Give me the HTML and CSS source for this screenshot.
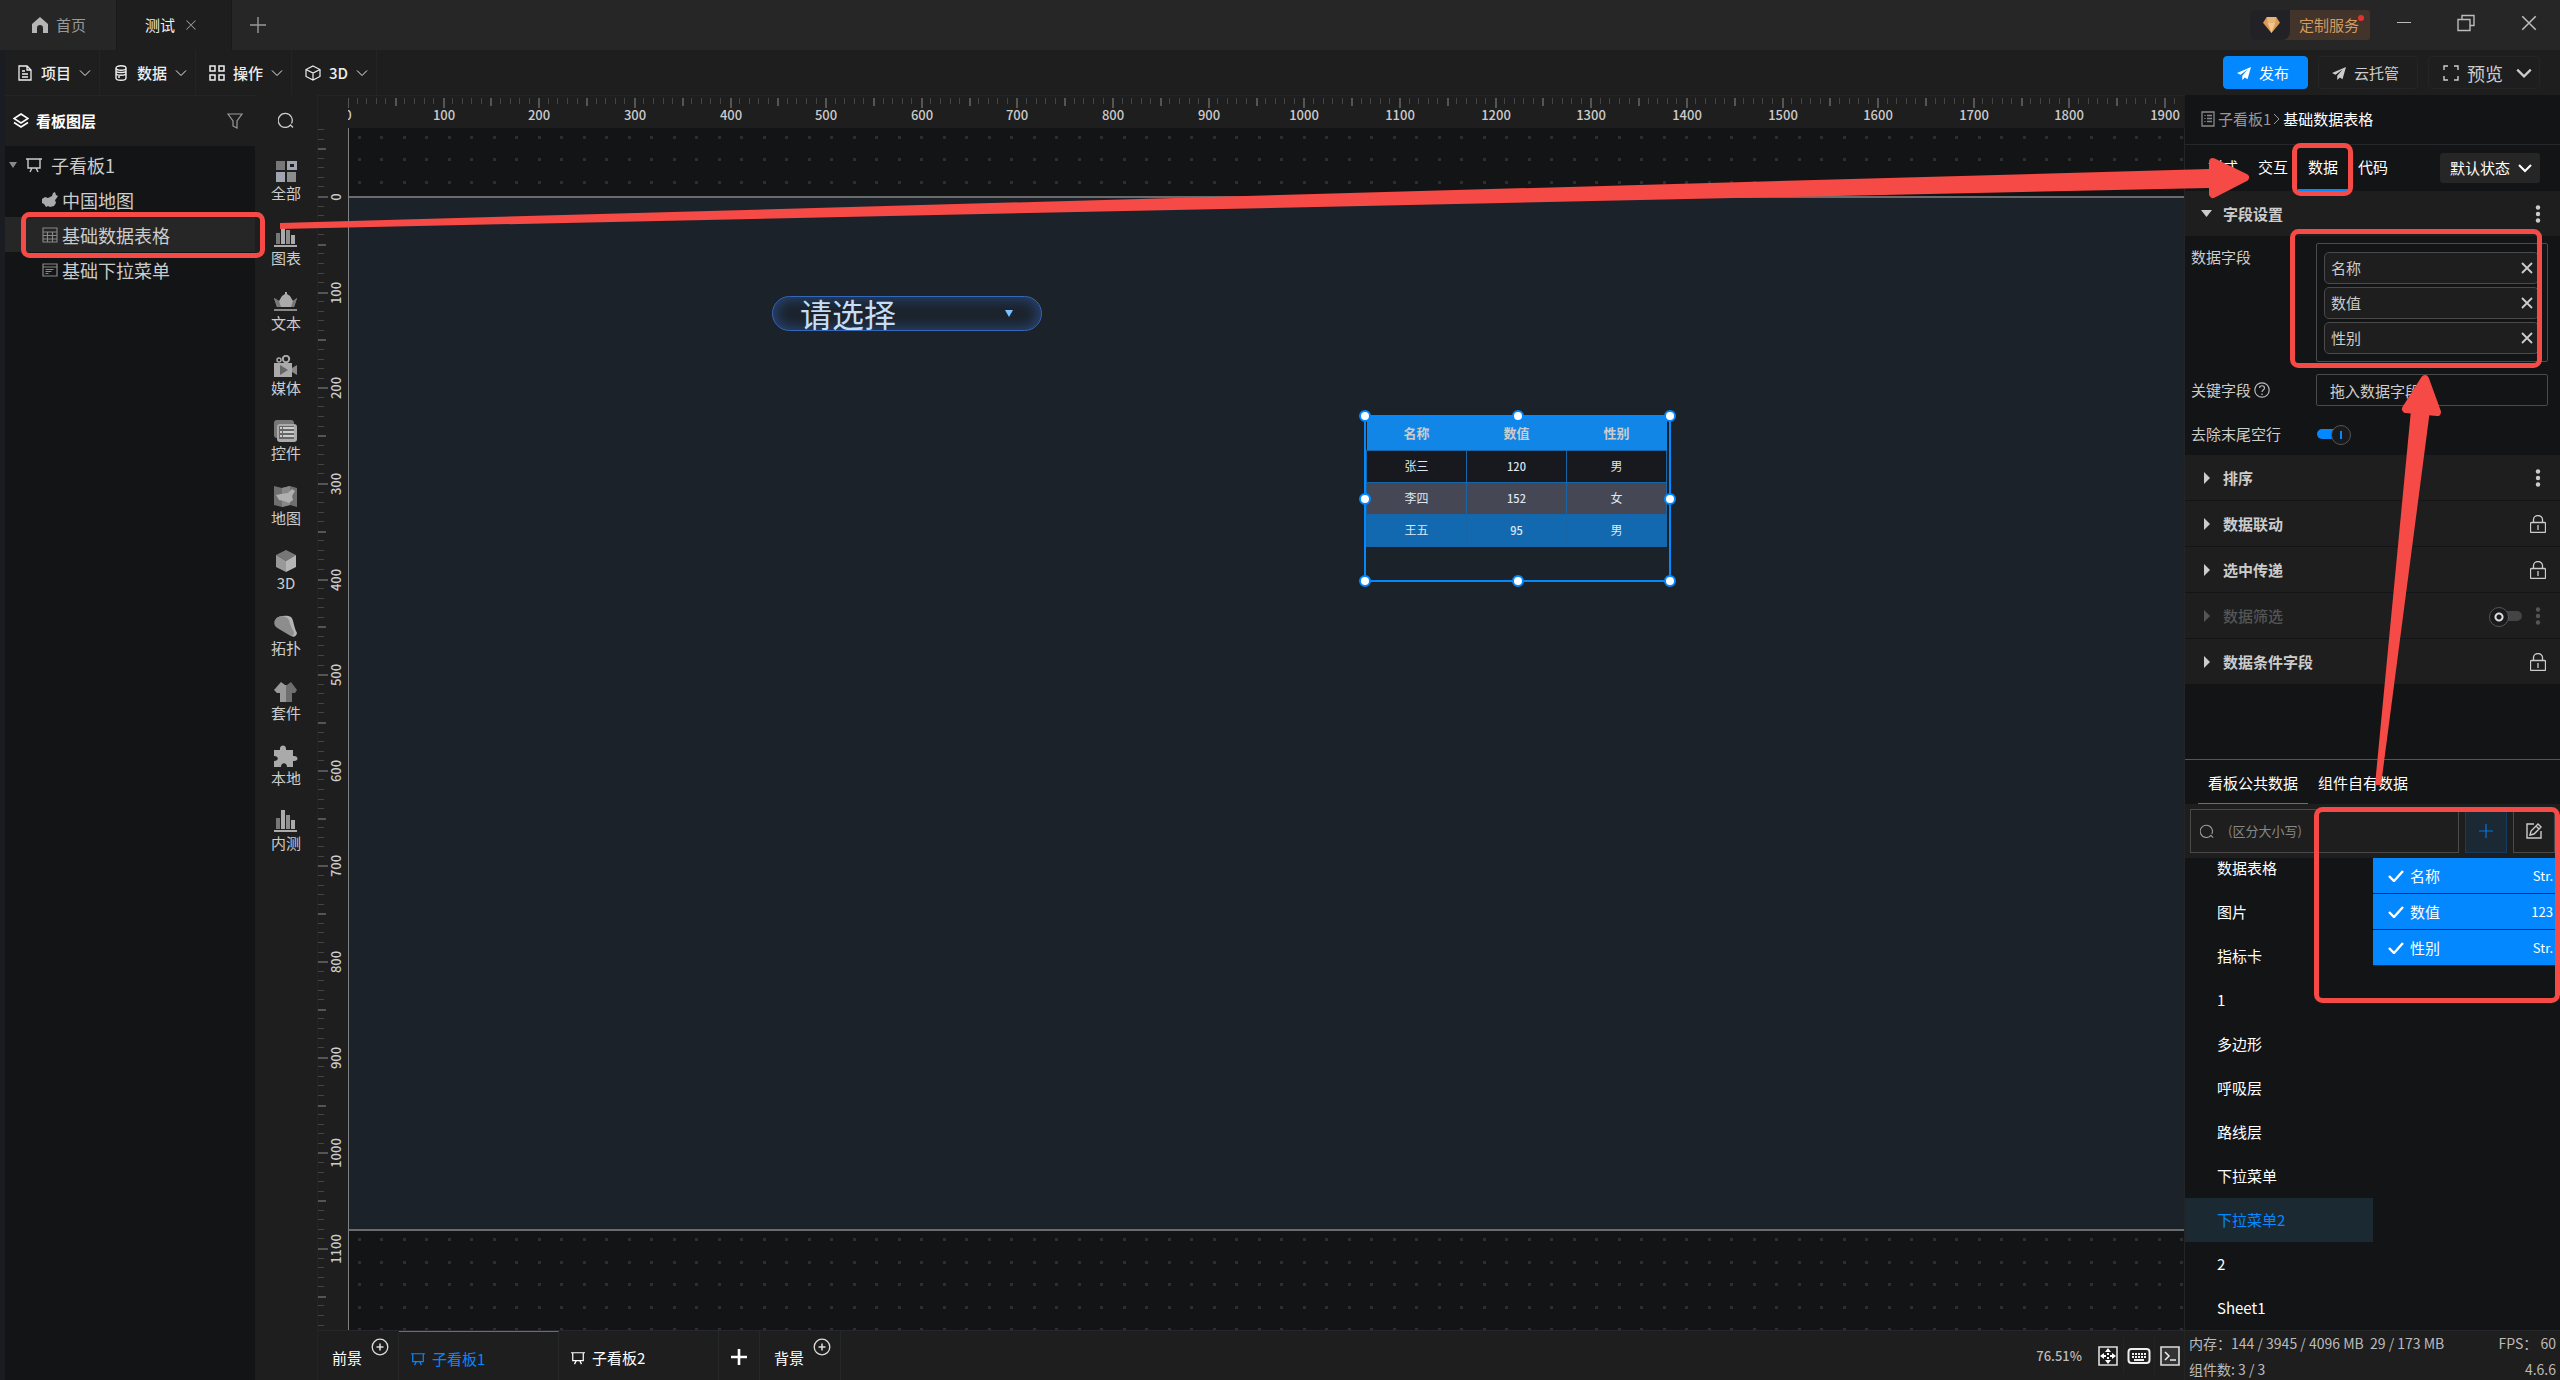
FILE: index.html
```html
<!DOCTYPE html>
<html lang="zh-CN">
<head>
  <meta charset="UTF-8">
  <meta name="viewport" content="width=device-width, initial-scale=1.0">
  <title>测试</title>
  <link rel="stylesheet" href="styles.css">
</head>
<body>
  <svg class="sprite" aria-hidden="true">
    <symbol id="chevron" viewBox="0 0 12 12"><path d="M1 3.5l5 5 5-5" fill="none" stroke="currentColor"/></symbol>
    <symbol id="chevron-bold" viewBox="0 0 16 16"><path d="M2 5l6 6 6-6" fill="none" stroke="currentColor" stroke-width="2"/></symbol>
    <symbol id="close" viewBox="0 0 16 16"><path d="M2 2l12 12M14 2L2 14" fill="none" stroke="currentColor" stroke-width="1.4"/></symbol>
    <symbol id="close-bold" viewBox="0 0 12 12"><path d="M1 1l10 10M11 1L1 11" fill="none" stroke="currentColor" stroke-width="1.8"/></symbol>
    <symbol id="board" viewBox="0 0 16 16"><path d="M0 2h16M2 2v9h12V2M6 11l-2 4M10 11l2 4" fill="none" stroke="currentColor" stroke-width="1.4"/></symbol>
    <symbol id="plane" viewBox="0 0 16 16"><path d="M16 1L0 8l4 2 8-6-6 7v5l3-3 3 2z" fill="currentColor"/></symbol>
    <symbol id="search" viewBox="0 0 16 16"><path d="M12.500 13a7 7 0 1 1 1-1.500M12 12.500l3 3" fill="none" stroke="currentColor" stroke-width="1.300"/></symbol>
    <symbol id="dots" viewBox="0 0 16 20"><g fill="currentColor"><circle cx="8" cy="3.500" r="2.200"/><circle cx="8" cy="10" r="2.200"/><circle cx="8" cy="16.500" r="2.200"/></g></symbol>
    <symbol id="lock" viewBox="0 0 16 18"><path d="M1.500 7.500h13a1 1 0 0 1 1 1v8a1 1 0 0 1-1 1h-13a1 1 0 0 1-1-1v-8a1 1 0 0 1 1-1zM3.500 7V4.500a4.500 4 0 0 1 9 0V7M8 10v5" fill="none" stroke="currentColor" stroke-width="1.300"/></symbol>
    <symbol id="circle-plus" viewBox="0 0 18 18"><path d="M9 5.500v7M5.500 9h7" stroke="currentColor" stroke-width="1.500"/><circle cx="9" cy="9" r="7.800" fill="none" stroke="currentColor" stroke-width="1.300"/></symbol>
    <symbol id="check" viewBox="0 0 16 12"><path d="M1 6l5 5 9-10" fill="none" stroke="currentColor" stroke-width="2.400"/></symbol>
    <symbol id="bars" viewBox="0 0 24 22"><path d="M2 8h4v11H2z" fill="#777"/><path d="M7 0h4v19H7z" fill="#aaa"/><path d="M12 5h4v14h-4z" fill="#8d8d8d"/><path d="M17 10h4v9h-4zM0 20h23v2H0z" fill="#aaa"/></symbol>
  </svg>

  <header class="titlebar">
    <button class="win-tab home-tab">
      <svg class="i16" viewBox="0 0 16 16"><path d="M8 0L0 7v9h5v-5a3 3 0 0 1 6 0v5h5V7z" fill="#b5b5b5"/></svg>
      <span>首页</span>
    </button>
    <button class="win-tab active">
      <span>测试</span>
      <svg class="i12"><use href="#close"/></svg>
    </button>
    <button class="new-tab" aria-label="新建"><svg class="i16" viewBox="0 0 16 16"><path d="M8 0v16M0 8h16" stroke="#999" stroke-width="1.400"/></svg></button>
    <div class="spacer"></div>
    <button class="vip">
      <span class="gem"><svg viewBox="0 0 18 17"><path d="M4 0h10l4 6-9 11L0 6z" fill="#d89a55"/><path d="M5 6h8L9 17z" fill="#f3c68f"/><path d="M4 0h10l-1 6H5z" fill="#e8b479"/></svg></span>
      <span class="vip-text">定制服务</span>
    </button>
    <button class="win-btn minimize" aria-label="最小化"><svg class="i18" viewBox="0 0 18 18"><path d="M2 8.500h14" stroke="#bbb"/></svg></button>
    <button class="win-btn restore" aria-label="还原"><svg class="i18" viewBox="0 0 18 18"><path d="M1 5.500h12v11H1zM5 5V1.500h12v10h-4" fill="none" stroke="#bbb" stroke-width="1.400"/></svg></button>
    <button class="win-btn quit" aria-label="关闭"><svg class="i18"><use href="#close"/></svg></button>
  </header>

  <nav class="menubar">
    <button class="menu"><svg class="i16" viewBox="0 0 16 16"><path d="M2 1h8l4 4v10H2zM10 1v4h4M5 6h3M5 9h6M5 12h6" fill="none" stroke="currentColor" stroke-width="1.300"/></svg>项目<svg class="i12"><use href="#chevron"/></svg></button>
    <button class="menu"><svg class="i16" viewBox="0 0 16 16"><path d="M3 3v10c0 3 10 3 10 0V3M3 3c0-3 10-3 10 0s-10 3-10 0M3 8c0 3 10 3 10 0M3 6c0 2 10 2 10 0M5 12h2" fill="none" stroke="currentColor" stroke-width="1.400"/></svg>数据<svg class="i12"><use href="#chevron"/></svg></button>
    <button class="menu"><svg class="i16" viewBox="0 0 16 16"><path d="M1 1h5v5H1zM10 1h5v5h-5zM1 10h5v5H1zM10 10h5v5h-5z" fill="none" stroke="currentColor" stroke-width="1.500"/></svg>操作<svg class="i12"><use href="#chevron"/></svg></button>
    <button class="menu"><svg class="i16" viewBox="0 0 16 16"><path d="M8 1l7 3.500v7L8 15l-7-3.500v-7zM1 4.500L8 8l7-3.500M8 8v7" fill="none" stroke="currentColor" stroke-width="1.200"/></svg>3D<svg class="i12"><use href="#chevron"/></svg></button>
    <div class="spacer"></div>
    <div class="actions">
      <button class="action publish"><svg class="i14"><use href="#plane"/></svg>发布</button>
      <button class="action hosting"><svg class="i14"><use href="#plane"/></svg>云托管</button>
      <button class="action preview"><svg class="i16" viewBox="0 0 16 16"><path d="M1 5V1h4M11 1h4v4M15 11v4h-4M5 15H1v-4" fill="none" stroke="currentColor" stroke-width="1.400"/></svg>预览<svg class="i18"><use href="#chevron-bold"/></svg></button>
    </div>
  </nav>

  <main class="workspace">
    <aside class="layers">
      <div class="layers-head">
        <svg class="i16" viewBox="0 0 16 16"><path d="M8 1l7 4.500L8 10 1 5.500zM1 9.500L8 14l7-4.500" fill="none" stroke="#fff" stroke-width="1.600"/></svg>
        <h2>看板图层</h2>
        <button aria-label="筛选"><svg class="i16" viewBox="0 0 16 16"><path d="M1 1h14l-5 7v7l-4-2V8z" fill="none" stroke="#999" stroke-width="1.200"/></svg></button>
      </div>
      <ul class="tree">
        <li><button class="tree-row root"><svg class="caret" viewBox="0 0 8 8"><path d="M0 1h8L4 7z" fill="#888"/></svg><svg class="i16"><use href="#board"/></svg><span>子看板1</span></button></li>
        <li><button class="tree-row"><svg class="i16" viewBox="0 0 16 16"><path d="M0 7l3-2 3 1 4-2 1-3 2-1 1 3 2 1-2 3-1 1 1 3-2 3-4 1-2-1-2 1-2-3-2-1z" fill="#aaa"/></svg>中国地图</button></li>
        <li><button class="tree-row selected"><svg class="i16" viewBox="0 0 16 16"><path d="M1 1h14v14H1zM1 5h14M1 8.500h14M1 12h14M5.500 5v10M10.500 5v10" fill="none" stroke="#888" stroke-width="1.100"/></svg>基础数据表格</button></li>
        <li><button class="tree-row"><svg class="i16" viewBox="0 0 16 16"><path d="M1 2h14v12H1zM1 5h14M3.500 7.500h8M3.500 9.500h6M3.500 11.500h3" fill="none" stroke="#888" stroke-width="1.200"/></svg>基础下拉菜单</button></li>
      </ul>
    </aside>

    <nav class="palette">
      <button class="palette-search" aria-label="搜索"><svg class="i16"><use href="#search"/></svg></button>
      <button class="tool"><svg viewBox="0 0 24 22"><path d="M2 1h9v9H2z" fill="#777"/><path d="M14.500 2.500h7v6h-7z" fill="none" stroke="#a0a3b0" stroke-width="3"/><path d="M2 12h9v10H2z" fill="#a0a3b0"/><path d="M13 12h9v10h-9z" fill="#8d8d8d"/></svg>全部</button>
      <button class="tool"><svg><use href="#bars"/></svg>图表</button>
      <button class="tool"><svg viewBox="0 0 24 22"><path d="M0 8l5 3 3-5 3-2V2h2v2l3 2 3 5 4-3-3 9H3z" fill="#aaa"/><path d="M0 8l5 3 2 6H3zM23 8l-4 3-2 6h3z" fill="#777"/><path d="M0 19h23v2H0z" fill="#888"/></svg>文本</button>
      <button class="tool"><svg viewBox="0 0 24 22"><circle cx="12" cy="4" r="3.200" fill="none" stroke="#aaa" stroke-width="2"/><circle cx="5" cy="5" r="2" fill="none" stroke="#aaa" stroke-width="1.500"/><path d="M0 8h18v14H0z" fill="#aaa"/><path d="M18 13l5-3v10l-5-3z" fill="#888"/><path d="M6 10l8 5-8 5z" fill="#666"/></svg>媒体</button>
      <button class="tool"><svg viewBox="0 0 24 22"><rect width="20" height="18" rx="3" fill="#777"/><rect x="3" y="4" width="20" height="18" rx="3" fill="#aaa"/><path d="M5 6h15v13H5z" fill="#666"/><path d="M6 8h2M9 8h11M6 12h2M9 12h11M6 16h2M9 16h11" stroke="#ccc" stroke-width="2"/></svg>控件</button>
      <button class="tool"><svg viewBox="0 0 24 22"><path d="M0 1l8 2 8-2 7 2v19l-7-2-8 2-8-2z" fill="#6f6f6f"/><path d="M8 3l8-2v19l-8 2z" fill="#888"/><path d="M2 10l5-1 7-1 4-4 3 2-3 5 1 4-4 3-5-2-5-1z" fill="#b0b0b0"/></svg>地图</button>
      <button class="tool"><svg viewBox="0 0 24 22"><path d="M12 0l10 5-10 6L2 5z" fill="#777"/><path d="M2 5l10 6v11L2 17z" fill="#999"/><path d="M22 5l-10 6v11l10-5z" fill="#b5b5b5"/></svg>3D</button>
      <button class="tool"><svg viewBox="0 0 24 22"><path d="M2 4c3-4 12-4 15-2 3 3 2 8 6 16-1 5-5 4-7 2z" fill="#b5b5b5"/><path d="M1 5c3-6 12-4 14 0 1 4 2 8 5 12 0 5-3 4-5 3L5 14C1 12-1 9 1 5z" fill="#8d8d8d"/></svg>拓扑</button>
      <button class="tool"><svg viewBox="0 0 24 22"><path d="M7 2l4 3h1v17H6V13H3L0 10z" fill="#999"/><path d="M17 2l-4 3h-1v17h6V13h3l2-3z" fill="#6f6f6f"/></svg>套件</button>
      <button class="tool"><svg viewBox="0 0 24 22"><path d="M0 5h6c-1-6 7-6 6 0h7v6c6-1 6 6 0 5v6h-6c0-5-6-5-6 0H0v-6c5 0 5-5 0-5z" fill="#aaa"/></svg>本地</button>
      <button class="tool"><svg><use href="#bars"/></svg>内测</button>
    </nav>

    <section class="stage">
      <div class="corner"></div>
      <svg class="ruler-x" id="rulerX"></svg>
      <svg class="ruler-y" id="rulerY"></svg>
      <div class="canvas">
        <svg class="grid">
          <pattern id="gridDots" width="45" height="45" patternUnits="userSpaceOnUse"><path d="M9 8h3v3H9zM31 8h3v3h-3zM9 30h3v3H9zM31 30h3v3h-3z" fill="#2c2e30"/></pattern>
          <rect width="100%" height="100%" fill="url(#gridDots)"/>
        </svg>
        <div class="screen"></div>
        <select class="widget-select" aria-label="请选择"><option>请选择</option></select>
        <div class="selection">
          <table>
            <thead><tr><th>名称</th><th>数值</th><th>性别</th></tr></thead>
            <tbody>
              <tr class="dark"><td>张三</td><td class="num">120</td><td>男</td></tr>
              <tr class="gray"><td>李四</td><td class="num">152</td><td>女</td></tr>
              <tr class="blue"><td>王五</td><td class="num">95</td><td>男</td></tr>
            </tbody>
          </table>
          <i class="handle n w"></i><i class="handle n c"></i><i class="handle n e"></i>
          <i class="handle m w"></i><i class="handle m e"></i>
          <i class="handle s w"></i><i class="handle s c"></i><i class="handle s e"></i>
        </div>
      </div>
      <footer class="sheets">
        <button class="ground">前景<svg class="i18"><use href="#circle-plus"/></svg></button>
        <button class="sheet active"><svg class="i14"><use href="#board"/></svg>子看板1</button>
        <button class="sheet"><svg class="i14"><use href="#board"/></svg>子看板2</button>
        <button class="add-sheet" aria-label="添加"><svg class="i16" viewBox="0 0 16 16"><path d="M8 0v16M0 8h16" stroke="#fff" stroke-width="2.600"/></svg></button>
        <button class="ground">背景<svg class="i18"><use href="#circle-plus"/></svg></button>
        <div class="spacer"></div>
        <span class="zoom">76.51%</span>
        <button class="view-btn" aria-label="适应"><svg viewBox="0 0 24 20"><path d="M3 1h18v18H3z" fill="none" stroke="#ddd" stroke-width="1.600"/><path d="M12 2l3 4H9zM12 18l3-4H9zM4 10l4-3v6zM20 10l-4-3v6zM11 7h2v2h-2zM11 11h2v2h-2zM8 9h2v2H8zM14 9h2v2h-2z" fill="#fff"/></svg></button>
        <button class="view-btn" aria-label="快捷键"><svg viewBox="0 0 24 20"><rect x="1.500" y="3" width="21" height="14" rx="3" fill="none" stroke="#eee" stroke-width="2"/><path d="M5 8h14M5 11h14" stroke="#eee" stroke-width="2" stroke-dasharray="2 1"/><path d="M7 14h10" stroke="#eee" stroke-width="2"/></svg></button>
        <button class="view-btn" aria-label="控制台"><svg viewBox="0 0 24 20"><path d="M3 1h18v18H3z" fill="#333" stroke="#ddd" stroke-width="1.600"/><path d="M7 6l4 4-4 4M12 14h6" fill="none" stroke="#eee" stroke-width="1.500"/></svg></button>
      </footer>
    </section>

    <aside class="inspector">
      <div class="crumbs">
        <svg class="i16" viewBox="0 0 16 16"><path d="M2 1h12v14H2zM5 4v1M5 7v1M5 10v1M7 4.500h5M7 7.500h5M7 10.500h5" fill="none" stroke="#888" stroke-width="1.300"/></svg>
        <a href="#">子看板1</a>
        <svg class="crumb-sep" viewBox="0 0 8 12"><path d="M1 1l5 5-5 5" fill="none" stroke="#999"/></svg>
        <span>基础数据表格</span>
      </div>
      <div class="tabs">
        <button>样式</button>
        <button>交互</button>
        <button class="active">数据</button>
        <button>代码</button>
        <div class="state"><select aria-label="状态"><option>默认状态</option></select><svg class="i16"><use href="#chevron-bold"/></svg></div>
      </div>

      <button class="section open"><svg class="tri" viewBox="0 0 12 12"><path d="M0 2h11L5.500 9z" fill="#ccc"/></svg><span>字段设置</span><svg class="dots"><use href="#dots"/></svg></button>
      <div class="fields">
        <div class="field top">
          <span class="label">数据字段</span>
          <div class="chips">
            <div class="chip">名称<button aria-label="移除名称"><svg class="i12"><use href="#close-bold"/></svg></button></div>
            <div class="chip">数值<button aria-label="移除数值"><svg class="i12"><use href="#close-bold"/></svg></button></div>
            <div class="chip">性别<button aria-label="移除性别"><svg class="i12"><use href="#close-bold"/></svg></button></div>
          </div>
        </div>
        <div class="field">
          <label class="label" for="keyField">关键字段<svg class="i16" viewBox="0 0 16 16"><circle cx="8" cy="8" r="7.200" fill="none" stroke="#bbb" stroke-width="1.200"/><path d="M5.500 6c0-3 5-3 5 0 0 2-2.500 2-2.500 4M8 11.500v1.500" fill="none" stroke="#bbb" stroke-width="1.200"/></svg></label>
          <input id="keyField" type="text" placeholder="拖入数据字段">
        </div>
        <div class="field">
          <label class="label" for="trimRows">去除末尾空行</label>
          <input class="switch" id="trimRows" type="checkbox" checked>
        </div>
      </div>
      <div class="sections">
        <button class="section"><svg class="tri" viewBox="0 0 12 12"><path d="M3 0l6 6-6 6z" fill="#ccc"/></svg><span>排序</span><svg class="dots"><use href="#dots"/></svg></button>
        <button class="section"><svg class="tri" viewBox="0 0 12 12"><path d="M3 0l6 6-6 6z" fill="#ccc"/></svg><span>数据联动</span><svg class="lock"><use href="#lock"/></svg></button>
        <button class="section"><svg class="tri" viewBox="0 0 12 12"><path d="M3 0l6 6-6 6z" fill="#ccc"/></svg><span>选中传递</span><svg class="lock"><use href="#lock"/></svg></button>
        <div class="section off"><svg class="tri" viewBox="0 0 12 12"><path d="M3 0l6 6-6 6z" fill="#555"/></svg><label for="filterOn">数据筛选</label><input class="switch" id="filterOn" type="checkbox"><svg class="dots"><use href="#dots"/></svg></div>
        <button class="section"><svg class="tri" viewBox="0 0 12 12"><path d="M3 0l6 6-6 6z" fill="#ccc"/></svg><span>数据条件字段</span><svg class="lock"><use href="#lock"/></svg></button>
      </div>

      <div class="data-pane">
        <div class="data-tabs">
          <button class="active">看板公共数据</button>
          <button>组件自有数据</button>
        </div>
        <div class="data-tools">
          <label class="search-box"><svg class="i14"><use href="#search"/></svg><input type="text" placeholder="(区分大小写)" aria-label="搜索数据"></label>
          <button class="tool-add" aria-label="新增"><svg class="i14" viewBox="0 0 14 14"><path d="M7 0v14M0 7h14" stroke="currentColor" stroke-width="1.200"/></svg></button>
          <button class="tool-edit" aria-label="编辑"><svg class="i16" viewBox="0 0 16 16"><path d="M8 1H1v14h14V8M4 12l1-4 7-7 3 3-7 7zM10 3l3 3" fill="none" stroke="currentColor" stroke-width="1.400"/></svg></button>
        </div>
        <div class="data-body">
          <div class="datasets">
            <button>数据表格</button>
            <button>图片</button>
            <button>指标卡</button>
            <button>1</button>
            <button>多边形</button>
            <button>呼吸层</button>
            <button>路线层</button>
            <button>下拉菜单</button>
            <button class="active">下拉菜单2</button>
            <button>2</button>
            <button>Sheet1</button>
          </div>
          <div class="columns">
            <button><svg><use href="#check"/></svg><span>名称</span><small>Str.</small></button>
            <button><svg><use href="#check"/></svg><span>数值</span><small>123</small></button>
            <button><svg><use href="#check"/></svg><span>性别</span><small>Str.</small></button>
          </div>
        </div>
      </div>
      <div class="status">
        <span>内存：144 / 3945 / 4096 MB&nbsp; 29 / 173 MB</span><span>FPS： 60</span>
        <span>组件数: 3 / 3</span><span>4.6.6</span>
      </div>
    </aside>
  </main>

  <svg class="marks" viewBox="0 0 2560 1380" preserveAspectRatio="none" aria-hidden="true">
    <g fill="none" stroke="#f54a45" stroke-width="5">
      <rect x="23.500" y="214.500" width="239" height="41" rx="6"/>
      <rect x="2294.500" y="145.500" width="56" height="48" rx="6"/>
      <rect x="2292.500" y="231.500" width="247" height="134" rx="6"/>
      <rect x="2316.500" y="809.500" width="241" height="191" rx="6"/>
    </g>
    <g fill="#f54a45" stroke="#f54a45" stroke-linejoin="round">
      <path d="M280 223L2209 169v19L280 229z" stroke="none"/>
      <path d="M2213 162l32 15.500-32 16.500z" stroke-width="8"/>
      <path d="M2375 785L2411 410h19L2381 785z" stroke="none"/>
      <path d="M2425 379l-19 30 31 3z" stroke-width="8"/>
    </g>
  </svg>

  <script>
    const SCALE = 0.7651 * 1.25;
    const NS = 'http://www.w3.org/2000/svg';

    function add(parent, name, attrs, text) {
      const el = document.createElementNS(NS, name);
      for (const key in attrs) el.setAttribute(key, attrs[key]);
      if (text !== undefined) el.textContent = text;
      parent.appendChild(el);
    }

    // one tick every 10 units, a longer one at 50 and a label at 100
    function drawRuler(svg, vertical, origin, from, to) {
      for (let v = from; v <= to; v += 10) {
        const pos = Math.round(origin + v * SCALE);
        const big = v % 100 === 0;
        const mid = v % 50 === 0;
        const len = big ? 10 : mid ? 8 : 6;
        const w = mid ? 2 : 1;
        const fill = mid ? '#555' : '#444';
        if (vertical) {
          add(svg, 'rect', { x: 0, y: pos, width: len, height: w, fill });
          if (big) add(svg, 'text', { transform: `translate(23 ${pos + 1}) rotate(-90)` }, v);
        } else {
          add(svg, 'rect', { x: pos, y: 2, width: w, height: len, fill });
          if (big) add(svg, 'text', { x: pos + 1, y: 24 }, v);
        }
      }
    }

    drawRuler(document.getElementById('rulerX'), false, -1, 0, 1910);
    drawRuler(document.getElementById('rulerY'), true, 68, -70, 1180);
  </script>
</body>
</html>
```
FILE: styles.css
```css
* {
  box-sizing: border-box;
}
body {
  margin: 0;
  height: 100vh;
  display: flex;
  flex-direction: column;
  overflow: hidden;
  position: relative;
  background: #1a1c21;
  color: #ccc;
  font-family: "Noto Sans CJK SC", sans-serif;
  font-size: 15px;
  line-height: 20px;
}
button, input, select {
  font: inherit;
  color: inherit;
  background: none;
  border: 0;
  padding: 0;
  margin: 0;
  border-radius: 0;
  white-space: nowrap;
}
svg {
  display: block;
  flex: none;
}
a {
  color: inherit;
  text-decoration: none;
}
.sprite {
  position: absolute;
  width: 0;
  height: 0;
}
.i12 { width: 12px; height: 12px; }
.i14 { width: 14px; height: 14px; }
.i16 { width: 16px; height: 16px; }
.i18 { width: 18px; height: 18px; }
.spacer {
  flex: 1;
}

/* title bar */
.titlebar {
  height: 50px;
  flex: none;
  display: flex;
  align-items: center;
  padding-right: 4px;
  background: #262626;
}
.win-tab {
  width: 116px;
  height: 50px;
  display: flex;
  align-items: center;
  justify-content: center;
  gap: 8px;
  color: #999;
}
.home-tab {
  padding-left: 2px;
}
.win-tab.active {
  background: #1e1e1e;
  color: #eee;
  border-left: 1px solid #191919;
  border-right: 1px solid #191919;
  gap: 10px;
  padding-right: 6px;
}
.win-tab.active svg {
  color: #999;
}
.new-tab {
  padding: 0 18px;
}
.vip {
  display: flex;
  height: 30px;
  margin-right: 8px;
  border-radius: 3px;
  overflow: hidden;
  background: #43342b;
  color: #d39a62;
  position: relative;
}
.vip::after {
  content: "";
  position: absolute;
  right: 6px;
  top: 5px;
  width: 6px;
  height: 6px;
  border-radius: 50%;
  background: #e03434;
}
.gem {
  width: 40px;
  padding: 7px 10px 6px 13px;
  background: #222226;
  border-radius: 0 0 8px 0;
}
.vip-text {
  padding: 5px 11px 5px 9px;
}
.win-btn {
  height: 46px;
  display: flex;
  align-items: center;
  justify-content: center;
  color: #bbb;
  align-self: flex-start;
}
.minimize { width: 52px; }
.restore { width: 72px; }
.quit { width: 54px; }

/* menu bar */
.menubar {
  height: 45px;
  flex: none;
  display: flex;
  margin-left: 5px;
  background: #1e1e1e;
}
.menu {
  display: flex;
  align-items: center;
  gap: 8px;
  padding: 0 8px 0 13px;
  border-right: 1px solid #242424;
  color: #eee;
  font-weight: 500;
}
.menu:first-child {
  padding-left: 12px;
}
.actions {
  display: flex;
  align-items: center;
  gap: 10px;
  padding-right: 20px;
}
.action {
  height: 33px;
  padding: 0 18px 0 13px;
  display: flex;
  align-items: center;
  gap: 8px;
  border: 1px solid #252525;
  border-radius: 4px;
}
.publish {
  background: #0488ff;
  border-color: #0488ff;
  color: #fff;
}
.preview {
  padding: 0 6px 0 14px;
  font-size: 18px;
}
.preview .i18 {
  margin-left: 4px;
}

.workspace {
  flex: 1;
  min-height: 0;
  display: flex;
  padding-left: 5px;
}

/* layer tree */
.layers {
  width: 250px;
  background: #131416;
}
.layers-head {
  height: 51px;
  display: flex;
  align-items: center;
  gap: 7px;
  padding: 0 12px 0 8px;
  background: #1e1e1e;
  border-top: 1px solid #242424;
}
.layers-head h2 {
  flex: 1;
  margin: 0;
  font-size: 15px;
  color: #fff;
}
.tree {
  list-style: none;
  margin: 0;
  padding: 1px 0 0;
}
.tree-row {
  width: 100%;
  height: 35px;
  padding-left: 37px;
  display: flex;
  align-items: center;
  gap: 4px;
  font-size: 18px;
}
.tree-row.root {
  padding-left: 4px;
  gap: 9px;
}
.tree-row.selected {
  background: #262626;
}
.caret {
  width: 8px;
  height: 8px;
}

/* component palette */
.palette {
  width: 62px;
  display: flex;
  flex-direction: column;
  align-items: center;
  background: #1e1e1e;
}
.palette-search {
  height: 50px;
  color: #ccc;
}
.tool {
  height: 65px;
  padding-top: 15px;
  display: flex;
  flex-direction: column;
  align-items: center;
  gap: 1px;
}
.tool svg {
  width: 24px;
  height: 22px;
}

/* stage */
.stage {
  flex: 1;
  min-width: 0;
  display: grid;
  grid-template-columns: 30px 1fr;
  grid-template-rows: 32px 1fr 50px;
  background: #1e1e1e;
  border-left: 1px solid #242424;
  border-top: 1px solid #242424;
}
.ruler-x, .ruler-y {
  width: 100%;
  height: 100%;
  overflow: hidden;
}
.ruler-x text, .ruler-y text {
  fill: #ccc;
  font-size: 13px;
  font-weight: 500;
  text-anchor: middle;
}
.canvas {
  position: relative;
  overflow: hidden;
  background: #131416;
  border-left: 1px solid #808080;
  border-right: 1px solid #242424;
}
.grid {
  width: 100%;
  height: 100%;
}
.screen {
  position: absolute;
  left: 0;
  right: 0;
  top: 68px;
  height: 1035px;
  background: #1b222a;
  border: solid #6b6b6b;
  border-width: 2px 0;
}
.widget-select {
  position: absolute;
  left: 423px;
  top: 168px;
  width: 270px;
  height: 35px;
  padding-left: 27px;
  appearance: none;
  border: 1px solid #3468b8;
  border-radius: 18px;
  box-shadow: inset 0 0 16px #2c4f8a;
  color: #c4def8;
  font-size: 32px;
  line-height: 33px;
}
.canvas::after {
  content: "";
  position: absolute;
  left: 656px;
  top: 182px;
  border: solid transparent;
  border-top-color: #7cc4ff;
  border-width: 7px 4px 0;
}
.selection {
  position: absolute;
  left: 1015px;
  top: 287px;
  width: 307px;
  height: 167px;
  border: 2px solid #0488ff;
}
.selection table {
  width: 301px;
  border-collapse: collapse;
  table-layout: fixed;
  font-size: 12px;
  line-height: 16px;
  color: #dfe7f2;
}
.selection th {
  height: 33px;
  padding: 0;
  background: #1286e6;
  color: #ccc;
  font-size: 13px;
}
.selection td {
  height: 32px;
  padding: 0;
  text-align: center;
  border: 1px solid #1565a8;
}
.selection .num {
  font-size: 11px;
  font-weight: 500;
}
.dark { background: #17191f; }
.gray { background: #454854; }
.blue { background: #1369b0; }
.handle {
  position: absolute;
  width: 12px;
  height: 12px;
  border: 2px solid #0488ff;
  border-radius: 50%;
  background: #fff;
}
.handle.n { top: -7px; }
.handle.m { top: 76px; }
.handle.s { bottom: -7px; }
.handle.w { left: -7px; }
.handle.c { left: 146px; }
.handle.e { right: -7px; }

/* sheet tabs */
.sheets {
  grid-column: 1 / 3;
  display: flex;
  align-items: stretch;
  border-top: 1px solid #26272b;
  border-right: 1px solid #242424;
}
.sheets button {
  display: flex;
  align-items: center;
}
.ground {
  padding: 5px 9px 0 14px;
  gap: 9px;
  color: #fff;
  border-right: 1px solid #26272b;
}
.ground svg {
  align-self: flex-start;
  margin-top: 2px;
  color: #ddd;
}
.sheet {
  width: 160px;
  padding: 5px 12px 0;
  gap: 7px;
  color: #fff;
  border-right: 1px solid #26272b;
}
.sheet.active {
  color: #0488ff;
  border-top: 1px solid #0488ff;
}
.add-sheet {
  width: 41px;
  padding-top: 3px;
  justify-content: center;
  border-right: 1px solid #26272b;
}
.zoom {
  padding: 15px 11px 0 0;
  color: #bbb;
  font-size: 13px;
  font-weight: 500;
}
.view-btn {
  padding: 0 3px;
  margin: 6px 0;
  border-right: 1px solid #242424;
}
.view-btn:last-child {
  border: 0;
  padding-right: 2px;
}
.view-btn svg {
  width: 24px;
  height: 20px;
}

/* inspector */
.inspector {
  width: 375px;
  display: flex;
  flex-direction: column;
  background: #131416;
}
.crumbs {
  height: 50px;
  flex: none;
  display: flex;
  align-items: center;
  gap: 2px;
  padding: 0 0 2px 15px;
  border-bottom: 1px solid #26272a;
  color: #999;
}
.crumb-sep {
  width: 8px;
  height: 12px;
}
.crumbs span {
  color: #fff;
}
.tabs {
  height: 46px;
  flex: none;
  display: flex;
  align-items: center;
  padding: 0 20px 0 13px;
}
.tabs button {
  width: 50px;
  height: 46px;
  color: #fff;
  border-bottom: 2px solid transparent;
}
.tabs button.active {
  border-color: #0488ff;
}
.state {
  width: 100px;
  height: 30px;
  margin-left: auto;
  display: flex;
  align-items: center;
  border-radius: 3px;
  background: #262626;
  color: #fff;
  position: relative;
}
.state select {
  width: 100px;
  height: 30px;
  padding-left: 10px;
  appearance: none;
}
.state svg {
  position: absolute;
  right: 7px;
  pointer-events: none;
}
.section {
  width: 100%;
  height: 45px;
  flex: none;
  display: flex;
  align-items: center;
  gap: 10px;
  padding: 0 14px 0 16px;
  background: #1e1e1e;
  color: #ccc;
  font-weight: bold;
  text-align: left;
}
.section span, .section label {
  flex: 1;
}
.section.off {
  color: #555;
  font-weight: 500;
}
.tri {
  width: 12px;
  height: 12px;
}
.dots {
  width: 16px;
  height: 20px;
}
.lock {
  width: 16px;
  height: 18px;
}
.fields {
  padding: 7px 12px 5px 6px;
}
.field {
  display: flex;
  align-items: center;
  height: 32px;
  margin-top: 12px;
}
.field.top {
  height: auto;
  margin: 0;
  align-items: flex-start;
}
.label {
  width: 125px;
  display: flex;
  align-items: center;
  gap: 3px;
}
.top .label {
  padding-top: 4px;
}
.chips {
  flex: 1;
  display: flex;
  flex-direction: column;
  gap: 3px;
  padding: 8px 8px 7px 7px;
  border: 1px solid #4a4a4a;
  border-radius: 2px;
}
.chip {
  height: 32px;
  display: flex;
  align-items: center;
  justify-content: space-between;
  padding: 0 5px 0 6px;
  border: 1px solid #4a4a4a;
  border-radius: 5px;
  background: #1e1e1e;
}
.field input[type="text"] {
  flex: 1;
  height: 32px;
  padding: 0 13px;
  border: 1px solid #4a4a4a;
  border-radius: 2px;
}
#keyField::placeholder {
  color: #ccc;
}
.switch {
  appearance: none;
  width: 32px;
  height: 10px;
  margin: 0 1px;
  border-radius: 5px;
  position: relative;
  background: #444;
}
.switch:checked {
  background: #0488ff;
}
.section .switch {
  margin: 0 -2px 0 0;
}
.switch::after {
  content: "";
  position: absolute;
  left: -1px;
  top: -4px;
  width: 18px;
  height: 18px;
  border-radius: 50%;
  border: 1px solid #555;
  background: radial-gradient(circle, #1a1a1c 2px, #ddd 3px, #ddd 4px, #1a1a1c 5px);
}
.switch:checked::after {
  left: 14px;
  background: linear-gradient(#0488ff, #0488ff) center / 2px 8px no-repeat #1a1a1c;
}
.sections {
  display: flex;
  flex-direction: column;
  gap: 1px;
}

/* data sources */
.data-pane {
  flex: 1;
  min-height: 0;
  margin-top: 75px;
  display: flex;
  flex-direction: column;
  border-top: 1px solid #555;
}
.data-tabs {
  display: flex;
  padding-left: 13px;
}
.data-tabs button {
  width: 110px;
  height: 44px;
  padding-top: 2px;
  color: #fff;
  border-bottom: 1px solid transparent;
}
.data-tabs button.active {
  border-color: #0488ff;
}
.data-tools {
  display: flex;
  gap: 6px;
  height: 54px;
  padding: 5px;
  background: #1e1e1e;
}
.search-box {
  flex: 1;
  min-width: 0;
  display: flex;
  align-items: center;
  gap: 14px;
  padding-left: 9px;
  border: 1px solid #4a4a4a;
  color: #999;
}
.search-box input {
  flex: 1;
  min-width: 0;
  font-size: 13px;
}
.search-box input::placeholder {
  color: #888;
}
.tool-add, .tool-edit {
  width: 42px;
  display: flex;
  align-items: center;
  justify-content: center;
  border: 1px solid #4a4a4a;
}
.tool-add {
  border-color: #143c63;
  background: #1b2935;
  color: #0b75d8;
}
.data-body {
  flex: 1;
  min-height: 0;
  display: flex;
  overflow: hidden;
}
.datasets {
  width: 188px;
  display: flex;
  flex-direction: column;
  justify-content: flex-end;
}
.datasets button {
  height: 44px;
  flex: none;
  padding-left: 32px;
  text-align: left;
  color: #fff;
}
.datasets button.active {
  background: #1b2933;
  color: #0488ff;
}
.columns {
  flex: 1;
  padding-right: 5px;
}
.columns button {
  width: 100%;
  height: 36px;
  padding: 0 2px 0 15px;
  display: flex;
  align-items: center;
  gap: 6px;
  text-align: left;
  background: #0488ff;
  border-bottom: 1px solid #1c2a38;
  color: #fff;
}
.columns span {
  flex: 1;
}
.columns small {
  font-size: 13px;
}
.columns svg {
  width: 16px;
  height: 12px;
}
.status {
  height: 50px;
  flex: none;
  display: grid;
  grid-template-columns: 1fr auto;
  align-content: center;
  row-gap: 6px;
  padding: 0 4px;
  background: #1e1e1e;
  border-top: 1px solid #26272a;
  color: #bbb;
  font-size: 14px;
}
.status span:nth-child(even) {
  text-align: right;
}

/* guide arrows and frames over the whole page */
.marks {
  position: absolute;
  left: 0;
  top: 0;
  width: 100%;
  height: 100%;
  pointer-events: none;
}
```
